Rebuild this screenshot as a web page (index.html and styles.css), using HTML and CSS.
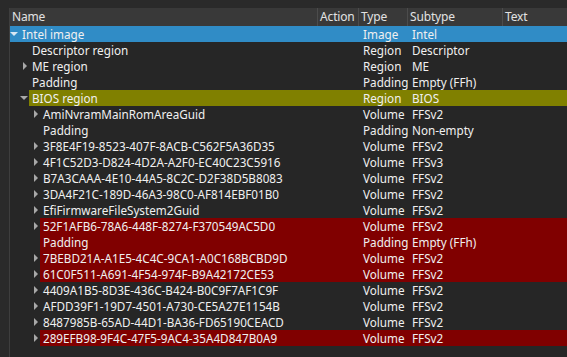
FILE: index.html
```html
<!DOCTYPE html>
<html>
<head>
<meta charset="utf-8">
<link rel="stylesheet" href="styles.css">
</head>
<body>
<div class="frame">
  <div class="header">
    <div class="hcell">Name</div>
    <div class="hcell">Action</div>
    <div class="hcell">Type</div>
    <div class="hcell">Subtype</div>
    <div class="hcell">Text</div>
  </div>
  <div class="rows">
    <div class="row selected l0"><span class="branch"><i class="arrow down"></i></span><div class="item"><span class="c name">Intel image</span><span class="c"></span><span class="c">Image</span><span class="c">Intel</span><span class="c"></span></div></div>
    <div class="row l1"><span class="branch"></span><div class="item"><span class="c name">Descriptor region</span><span class="c"></span><span class="c">Region</span><span class="c">Descriptor</span><span class="c"></span></div></div>
    <div class="row l1"><span class="branch"><i class="arrow right"></i></span><div class="item"><span class="c name">ME region</span><span class="c"></span><span class="c">Region</span><span class="c">ME</span><span class="c"></span></div></div>
    <div class="row l1"><span class="branch"></span><div class="item"><span class="c name">Padding</span><span class="c"></span><span class="c">Padding</span><span class="c">Empty (FFh)</span><span class="c"></span></div></div>
    <div class="row l1 olive"><span class="branch"><i class="arrow down"></i></span><div class="item"><span class="c name">BIOS region</span><span class="c"></span><span class="c">Region</span><span class="c">BIOS</span><span class="c"></span></div></div>
    <div class="row l2"><span class="branch"><i class="arrow right"></i></span><div class="item"><span class="c name">AmiNvramMainRomAreaGuid</span><span class="c"></span><span class="c">Volume</span><span class="c">FFSv2</span><span class="c"></span></div></div>
    <div class="row l2"><span class="branch"></span><div class="item"><span class="c name">Padding</span><span class="c"></span><span class="c">Padding</span><span class="c">Non-empty</span><span class="c"></span></div></div>
    <div class="row l2"><span class="branch"><i class="arrow right"></i></span><div class="item"><span class="c name">3F8E4F19-8523-407F-8ACB-C562F5A36D35</span><span class="c"></span><span class="c">Volume</span><span class="c">FFSv2</span><span class="c"></span></div></div>
    <div class="row l2"><span class="branch"><i class="arrow right"></i></span><div class="item"><span class="c name">4F1C52D3-D824-4D2A-A2F0-EC40C23C5916</span><span class="c"></span><span class="c">Volume</span><span class="c">FFSv3</span><span class="c"></span></div></div>
    <div class="row l2"><span class="branch"><i class="arrow right"></i></span><div class="item"><span class="c name">B7A3CAAA-4E10-44A5-8C2C-D2F38D5B8083</span><span class="c"></span><span class="c">Volume</span><span class="c">FFSv2</span><span class="c"></span></div></div>
    <div class="row l2"><span class="branch"><i class="arrow right"></i></span><div class="item"><span class="c name">3DA4F21C-189D-46A3-98C0-AF814EBF01B0</span><span class="c"></span><span class="c">Volume</span><span class="c">FFSv2</span><span class="c"></span></div></div>
    <div class="row l2"><span class="branch"><i class="arrow right"></i></span><div class="item"><span class="c name">EfiFirmwareFileSystem2Guid</span><span class="c"></span><span class="c">Volume</span><span class="c">FFSv2</span><span class="c"></span></div></div>
    <div class="row l2 red"><span class="branch"><i class="arrow right"></i></span><div class="item"><span class="c name">52F1AFB6-78A6-448F-8274-F370549AC5D0</span><span class="c"></span><span class="c">Volume</span><span class="c">FFSv2</span><span class="c"></span></div></div>
    <div class="row l2 red"><span class="branch"></span><div class="item"><span class="c name">Padding</span><span class="c"></span><span class="c">Padding</span><span class="c">Empty (FFh)</span><span class="c"></span></div></div>
    <div class="row l2 red"><span class="branch"><i class="arrow right"></i></span><div class="item"><span class="c name">7BEBD21A-A1E5-4C4C-9CA1-A0C168BCBD9D</span><span class="c"></span><span class="c">Volume</span><span class="c">FFSv2</span><span class="c"></span></div></div>
    <div class="row l2 red"><span class="branch"><i class="arrow right"></i></span><div class="item"><span class="c name">61C0F511-A691-4F54-974F-B9A42172CE53</span><span class="c"></span><span class="c">Volume</span><span class="c">FFSv2</span><span class="c"></span></div></div>
    <div class="row l2"><span class="branch"><i class="arrow right"></i></span><div class="item"><span class="c name">4409A1B5-8D3E-436C-B424-B0C9F7AF1C9F</span><span class="c"></span><span class="c">Volume</span><span class="c">FFSv2</span><span class="c"></span></div></div>
    <div class="row l2"><span class="branch"><i class="arrow right"></i></span><div class="item"><span class="c name">AFDD39F1-19D7-4501-A730-CE5A27E1154B</span><span class="c"></span><span class="c">Volume</span><span class="c">FFSv2</span><span class="c"></span></div></div>
    <div class="row l2"><span class="branch"><i class="arrow right"></i></span><div class="item"><span class="c name">8487985B-65AD-44D1-BA36-FD65190CEACD</span><span class="c"></span><span class="c">Volume</span><span class="c">FFSv2</span><span class="c"></span></div></div>
    <div class="row l2 red"><span class="branch"><i class="arrow right"></i></span><div class="item"><span class="c name">289EFB98-9F4C-47F5-9AC4-35A4D847B0A9</span><span class="c"></span><span class="c">Volume</span><span class="c">FFSv2</span><span class="c"></span></div></div>
  </div>
</div>
</body>
</html>
```

FILE: styles.css
```css
html, body {
  margin: 0;
  padding: 0;
  background: #2a2a2a;
  height: 100%;
  overflow: hidden;
}
body {
  font-family: "Noto Sans", "Open Sans", sans-serif;
  font-size: 11.7px;
  color: #f0f0f0;
}
.frame {
  margin: 8px 0 0 9px;
  border-left: 1px solid #3e3e3e;
  background: #262626;
  height: 349px;
}
.header {
  display: grid;
  grid-template-columns: 308px 41px 49px 95px 1fr;
  height: 18px;
  background: #393939;
  color: #e2e2e2;
  font-size: 12px;
  letter-spacing: -0.15px;
}
.hcell {
  border-right: 1px solid #4c4c4c;
  padding-left: 2px;
  line-height: 18px;
  white-space: nowrap;
  overflow: hidden;
}
.hcell:last-child { border-right: none; }
.rows {
  display: flex;
  flex-direction: column;
}
.row {
  display: flex;
  height: 16px;
  line-height: 16px;
}
.branch {
  flex: none;
  display: flex;
  align-items: center;
  justify-content: flex-end;
}
.l0 .branch { width: 9px; }
.l1 .branch { width: 19px; }
.l2 .branch { width: 30px; }
.item {
  flex: 1;
  display: grid;
  min-width: 0;
}
.l0 .item { grid-template-columns: 299px 41px 49px 95px 1fr; }
.l1 .item { grid-template-columns: 289px 41px 49px 95px 1fr; }
.l2 .item { grid-template-columns: 278px 41px 49px 95px 1fr; }
.c {
  white-space: nowrap;
  overflow: hidden;
  padding-left: 4px;
}
.c.name { padding-left: 3px; }
.selected { background: #308cc6; }
.olive .item { background: #808000; }
.red .item { background: #800000; }
.arrow {
  display: block;
  width: 0;
  height: 0;
  margin-right: 2px;
}
.arrow.right {
  border-top: 4px solid transparent;
  border-bottom: 4px solid transparent;
  border-left: 4px solid #a8a8a8;
}
.arrow.down {
  border-left: 4px solid transparent;
  border-right: 4px solid transparent;
  border-top: 4px solid #a8a8a8;
  margin-right: 1px;
}
.selected .arrow.down { border-top-color: #d8e8f4; }
```
